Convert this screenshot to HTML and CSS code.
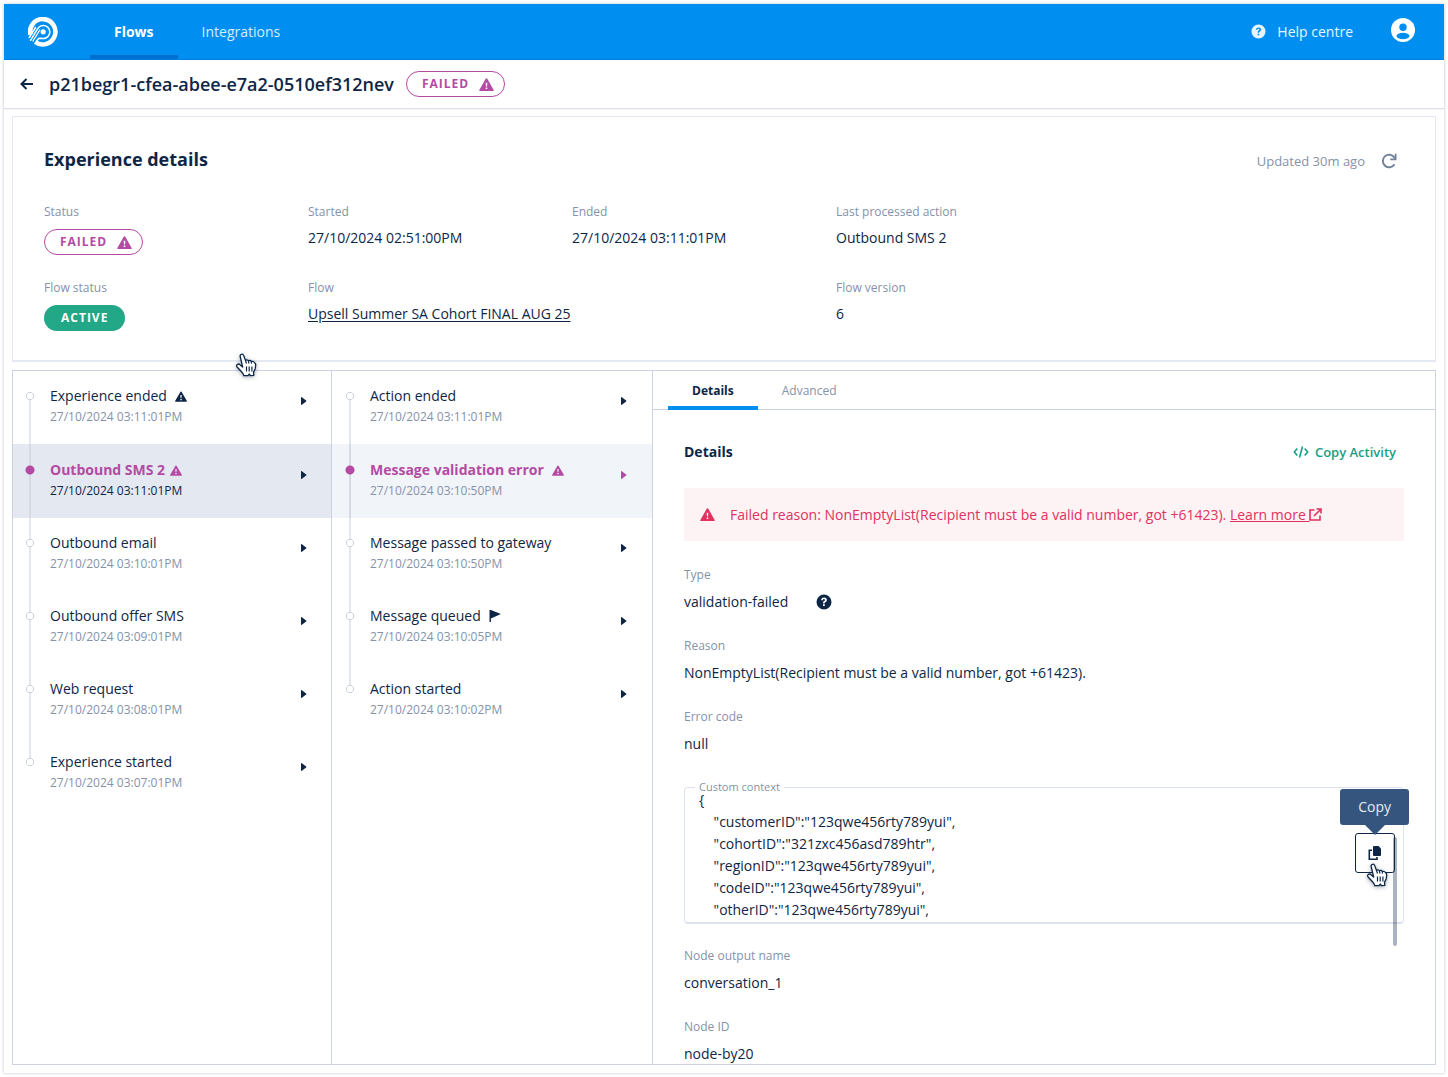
FILE: index.html
```html
<!DOCTYPE html>
<html lang="en">
<head>
    <meta charset="UTF-8">
    <meta name="viewport" content="width=device-width, initial-scale=1">
    <title>Experience details</title>
    <link rel="stylesheet" href="styles.css">
</head>
<body>
    <!-- Shared icons -->
    <svg class="icon-defs" aria-hidden="true">
        <symbol id="icon-warning" viewBox="0 0 16 14">
            <path fill="currentColor" fill-rule="evenodd" d="M7.3.6a.8.8 0 0 1 1.4 0l7 12.2a.8.8 0 0 1-.7 1.2H1a.8.8 0 0 1-.7-1.2zM7.1 5l.3 4.2h1.2L8.9 5zM7.1 10.3v1.6h1.8v-1.6z"/>
        </symbol>
        <symbol id="icon-help" viewBox="0 0 16 16">
            <path fill="currentColor" fill-rule="evenodd" d="M8 .5a7.500 7.500 0 1 1 0 15 7.500 7.500 0 0 1 0-15zM5.200 6.200h1.700c0-.8.4-1.200 1.100-1.200.6 0 1 .3 1 .9 0 .5-.3.8-.8 1.100-.8.500-1.100.900-1.100 2v.4h1.600v-.3c0-.5.2-.8.9-1.200.7-.4 1.200-1 1.200-2 0-1.400-1.100-2.300-2.700-2.300-1.800 0-2.900 1-2.900 2.600zM7 10.300v1.800h1.800v-1.800z"/>
        </symbol>
        <symbol id="icon-caret" viewBox="0 0 6 8">
            <path fill="currentColor" d="M0 .6C0 .1.500-.1.900.2l4.200 3.300a.6.6 0 0 1 0 1L.9 7.800C.5 8.100 0 7.900 0 7.400z"/>
        </symbol>
        <symbol id="icon-pointer" viewBox="0 0 22 24">
            <path fill="#fff" stroke="#0e2646" stroke-width="1.300" stroke-linejoin="round" d="M5.300 4C4.800 2.700 5.300 1.600 6.400 1.300c1-.3 1.900.2 2.300 1.300l1.800 4.900c.3-.9 2.500-.9 2.900.4.700-.8 2.500-.5 2.900.7 1.300-.6 2.700-.1 3.200 1.200.8.200 1.300.8 1.200 1.900-.1 1.300-.2 2.900-.6 4.300l-1.600 3.400.3 2.900-3.500.3-.9-1.600-1.400 1.700H8.800c-.2-1.700-1.300-3-2.700-4.400l-4-4.300C1.300 13 1.500 11.800 2.500 11.300c1-.5 2-.2 2.700.6l2.500 2.200z"/>
            <path fill="none" stroke="#0e2646" stroke-width="1.200" d="M10.500 7.500l1 3M13.400 8l.5 2.500M16.300 8.800l.2 1.800M11.500 13.500v5M14.200 13.500v5M16.900 13.500v5"/>
        </symbol>
    </svg>

    <div class="app">
        <header class="topbar">
            <a href="#" class="logo" aria-label="Home">
                <svg width="30" height="30" viewBox="0 0 30 30" fill="none" stroke="#fff">
                    <path stroke-width="4.600" d="M2.400 17.800A12.700 12.700 0 1 1 7.200 25"/>
                    <path stroke-width="1.500" stroke-linecap="round" d="M1.300 20.500L7.500 10.500"/>
                    <path stroke-width="1.500" stroke-linecap="round" d="M2.600 23.300L9.400 12.200A6.500 6.500 0 1 1 13.500 21.200L10.500 21.500L7.800 25.500"/>
                    <path stroke-width="1.300" stroke-linecap="round" d="M5 24L11.800 13"/>
                    <circle cx="15.200" cy="14.800" r="2.600" fill="#fff" stroke="none"/>
                </svg>
            </a>
            <nav class="main-nav">
                <a href="#" class="active">Flows</a>
                <a href="#">Integrations</a>
            </nav>
            <a href="#" class="help-link">
                <svg width="15" height="15"><use href="#icon-help"/></svg>
                Help centre
            </a>
            <button class="account" aria-label="Account">
                <svg width="24" height="24" viewBox="0 0 24 24">
                    <circle cx="12" cy="12" r="12" fill="#fff"/>
                    <circle cx="12" cy="9.200" r="3.700" fill="#008ff0"/>
                    <ellipse cx="12" cy="18" rx="6.500" ry="3.200" fill="#008ff0"/>
                </svg>
            </button>
        </header>

        <div class="title-bar">
            <a href="#" class="back" aria-label="Back">
                <svg width="13" height="12" viewBox="0 0 13 12" fill="none" stroke="currentColor" stroke-width="2">
                    <path d="M6.500 1L1.500 6l5 5M1.500 6H13"/>
                </svg>
            </a>
            <h1>p21begr1-cfea-abee-e7a2-0510ef312nev</h1>
            <span class="badge failed">FAILED <svg width="15" height="13"><use href="#icon-warning"/></svg></span>
        </div>

        <main>
            <section class="summary">
                <div class="summary-header">
                    <h2>Experience details</h2>
                    <span class="updated">Updated 30m ago</span>
                    <button class="refresh" aria-label="Refresh">
                        <svg width="16" height="16" viewBox="0 0 16 16" fill="none" stroke="currentColor" stroke-width="2">
                            <path d="M13.500 11.300A6.300 6.300 0 1 1 13.300 4.400L14.300 6"/>
                            <path fill="currentColor" stroke="none" d="M15.500.8v6.400H9.200V5.400h4.500V.8z"/>
                        </svg>
                    </button>
                </div>
                <dl class="facts">
                    <div>
                        <dt>Status</dt>
                        <dd><span class="badge failed">FAILED <svg width="15" height="13"><use href="#icon-warning"/></svg></span></dd>
                    </div>
                    <div>
                        <dt>Started</dt>
                        <dd>27/10/2024 02:51:00PM</dd>
                    </div>
                    <div>
                        <dt>Ended</dt>
                        <dd>27/10/2024 03:11:01PM</dd>
                    </div>
                    <div>
                        <dt>Last processed action</dt>
                        <dd>Outbound SMS 2</dd>
                    </div>
                    <div>
                        <dt>Flow status</dt>
                        <dd><span class="badge live">ACTIVE</span></dd>
                    </div>
                    <div class="wide">
                        <dt>Flow</dt>
                        <dd><a href="#">Upsell Summer SA Cohort FINAL AUG 25</a></dd>
                    </div>
                    <div>
                        <dt>Flow version</dt>
                        <dd>6</dd>
                    </div>
                </dl>
                <svg class="pointer summary-pointer" width="22" height="24"><use href="#icon-pointer"/></svg>
            </section>

            <section class="explorer">
                <ol class="timeline">
                    <li>
                        <button>
                            <span class="rail"></span>
                            <span class="entry">
                                <span class="name">Experience ended <svg width="12" height="11"><use href="#icon-warning"/></svg></span>
                                <time>27/10/2024 03:11:01PM</time>
                            </span>
                            <svg class="caret" width="6" height="8"><use href="#icon-caret"/></svg>
                        </button>
                    </li>
                    <li class="selected">
                        <button>
                            <span class="rail"></span>
                            <span class="entry">
                                <span class="name tight">Outbound SMS 2 <svg width="12" height="11"><use href="#icon-warning"/></svg></span>
                                <time>27/10/2024 03:11:01PM</time>
                            </span>
                            <svg class="caret" width="6" height="8"><use href="#icon-caret"/></svg>
                        </button>
                    </li>
                    <li>
                        <button>
                            <span class="rail"></span>
                            <span class="entry">
                                <span class="name">Outbound email</span>
                                <time>27/10/2024 03:10:01PM</time>
                            </span>
                            <svg class="caret" width="6" height="8"><use href="#icon-caret"/></svg>
                        </button>
                    </li>
                    <li>
                        <button>
                            <span class="rail"></span>
                            <span class="entry">
                                <span class="name">Outbound offer SMS</span>
                                <time>27/10/2024 03:09:01PM</time>
                            </span>
                            <svg class="caret" width="6" height="8"><use href="#icon-caret"/></svg>
                        </button>
                    </li>
                    <li>
                        <button>
                            <span class="rail"></span>
                            <span class="entry">
                                <span class="name">Web request</span>
                                <time>27/10/2024 03:08:01PM</time>
                            </span>
                            <svg class="caret" width="6" height="8"><use href="#icon-caret"/></svg>
                        </button>
                    </li>
                    <li>
                        <button>
                            <span class="rail"></span>
                            <span class="entry">
                                <span class="name">Experience started</span>
                                <time>27/10/2024 03:07:01PM</time>
                            </span>
                            <svg class="caret" width="6" height="8"><use href="#icon-caret"/></svg>
                        </button>
                    </li>
                </ol>

                <ol class="timeline actions">
                    <li>
                        <button>
                            <span class="rail"></span>
                            <span class="entry">
                                <span class="name">Action ended</span>
                                <time>27/10/2024 03:11:01PM</time>
                            </span>
                            <svg class="caret" width="6" height="8"><use href="#icon-caret"/></svg>
                        </button>
                    </li>
                    <li class="selected">
                        <button>
                            <span class="rail"></span>
                            <span class="entry">
                                <span class="name">Message validation error <svg width="12" height="11"><use href="#icon-warning"/></svg></span>
                                <time>27/10/2024 03:10:50PM</time>
                            </span>
                            <svg class="caret" width="6" height="8"><use href="#icon-caret"/></svg>
                        </button>
                    </li>
                    <li>
                        <button>
                            <span class="rail"></span>
                            <span class="entry">
                                <span class="name">Message passed to gateway</span>
                                <time>27/10/2024 03:10:50PM</time>
                            </span>
                            <svg class="caret" width="6" height="8"><use href="#icon-caret"/></svg>
                        </button>
                    </li>
                    <li>
                        <button>
                            <span class="rail"></span>
                            <span class="entry">
                                <span class="name">Message queued
                                    <svg width="12" height="12" viewBox="0 0 12 12"><path fill="currentColor" d="M.5 0h1.400l10 4-10 4.400V12H.5z"/></svg>
                                </span>
                                <time>27/10/2024 03:10:05PM</time>
                            </span>
                            <svg class="caret" width="6" height="8"><use href="#icon-caret"/></svg>
                        </button>
                    </li>
                    <li>
                        <button>
                            <span class="rail"></span>
                            <span class="entry">
                                <span class="name">Action started</span>
                                <time>27/10/2024 03:10:02PM</time>
                            </span>
                            <svg class="caret" width="6" height="8"><use href="#icon-caret"/></svg>
                        </button>
                    </li>
                </ol>

                <div class="detail-pane">
                    <div class="tabs" role="tablist">
                        <button role="tab" aria-selected="true" class="active">Details</button>
                        <button role="tab" aria-selected="false">Advanced</button>
                    </div>
                    <div class="detail-body">
                        <div class="detail-header">
                            <h3>Details</h3>
                            <button class="copy-activity">
                                <svg width="16" height="12" viewBox="0 0 16 12" fill="none" stroke="currentColor" stroke-width="1.600">
                                    <path d="M4.300 2.500L1.300 6l3 3.500M11.700 2.500l3 3.500-3 3.500M9.500.5l-3 11"/>
                                </svg>
                                Copy Activity
                            </button>
                        </div>

                        <div class="alert" role="alert">
                            <svg width="15" height="13"><use href="#icon-warning"/></svg>
                            <p>Failed reason: NonEmptyList(Recipient must be a valid number, got +61423).
                                <a href="#">Learn more <svg width="13" height="13" viewBox="0 0 13 13" fill="none" stroke="currentColor" stroke-width="1.600"><path d="M5.500 2H1v10h10V7.500M7.500 1H12v4.500M12 1L5 8"/></svg></a>
                            </p>
                        </div>

                        <dl class="fields">
                            <dt>Type</dt>
                            <dd>validation-failed <svg width="16" height="16"><use href="#icon-help"/></svg></dd>
                            <dt>Reason</dt>
                            <dd>NonEmptyList(Recipient must be a valid number, got +61423).</dd>
                            <dt>Error code</dt>
                            <dd>null</dd>
                        </dl>

                        <div class="context">
                            <fieldset>
                                <legend>Custom context</legend>
                                <pre>{
    "customerID":"123qwe456rty789yui",
    "cohortID":"321zxc456asd789htr",
    "regionID":"123qwe456rty789yui",
    "codeID":"123qwe456rty789yui",
    "otherID":"123qwe456rty789yui",</pre>
                            </fieldset>
                            <div class="copy-tool">
                                <span class="tooltip" role="tooltip">Copy</span>
                                <button aria-label="Copy custom context">
                                    <svg width="14" height="14" viewBox="0 0 14 14">
                                        <path fill="currentColor" d="M6 0h4.500L13 2.500V9a1 1 0 0 1-1 1H6a1 1 0 0 1-1-1V1a1 1 0 0 1 1-1z"/>
                                        <path fill="none" stroke="currentColor" stroke-width="1.600" d="M4 4.300H1.300v8.900H9V11"/>
                                    </svg>
                                </button>
                                <svg class="pointer copy-pointer" width="22" height="24"><use href="#icon-pointer"/></svg>
                            </div>
                            <span class="scroll-thumb"></span>
                        </div>

                        <dl class="fields">
                            <dt>Node output name</dt>
                            <dd>conversation_1</dd>
                            <dt>Node ID</dt>
                            <dd>node-by20</dd>
                        </dl>
                    </div>
                </div>
            </section>
        </main>
    </div>
</body>
</html>
```
FILE: styles.css
```css
* {
    margin: 0;
    padding: 0;
    box-sizing: border-box;
}

body {
    background-color: #fff;
    color: #0e2646;
    font-family: "Open Sans", "Noto Sans", sans-serif;
    font-size: 14px;
    line-height: 20px;
}

a {
    color: inherit;
}

button {
    background: none;
    border: none;
    color: inherit;
    font: inherit;
    cursor: pointer;
}

svg {
    flex-shrink: 0;
}

.icon-defs {
    position: absolute;
    width: 0;
    height: 0;
}

.app {
    display: flex;
    flex-direction: column;
    min-height: calc(100vh - 8px);
    margin: 4px;
    box-shadow: 0 0 3px rgba(50, 60, 110, 0.3);
}

/* Blue top bar */
.topbar {
    display: flex;
    align-items: center;
    height: 56px;
    padding: 0 29px 0 24px;
    background-color: #008ff0;
    border-bottom: 1px solid #0080e4;
    color: #fff;
}

.logo {
    display: flex;
    margin-right: 32px;
}

.main-nav {
    display: flex;
    align-self: stretch;
    flex: 1;
}

.main-nav a {
    padding: 18px 24px 0;
    color: #d4edff;
    text-decoration: none;
}

.main-nav a.active {
    border-bottom: 4px solid #006fd0;
    color: #fff;
    font-weight: 700;
}

.help-link {
    display: flex;
    align-items: center;
    gap: 11px;
    margin-right: 38px;
    color: #e6f5ff;
    text-decoration: none;
}

.account {
    display: flex;
    margin-bottom: 3px;
}

/* Title bar */
.title-bar {
    display: flex;
    align-items: center;
    height: 49px;
    padding: 0 16px;
    border-bottom: 1px solid #dcdfeb;
    box-shadow: 0 1px 2px rgba(50, 60, 110, 0.06);
}

.back {
    display: flex;
    margin-right: 16px;
}

.title-bar h1 {
    margin-right: 12px;
    font-size: 18px;
    font-weight: 600;
    line-height: 24px;
}

.badge {
    display: inline-flex;
    align-items: center;
    gap: 10px;
    height: 26px;
    padding: 0 15px;
    border-radius: 13px;
    font-size: 12px;
    font-weight: 700;
    letter-spacing: 1px;
}

.badge.failed {
    padding-right: 10px;
    border: 1px solid #b44aa4;
    color: #b44aa4;
}

.badge.live {
    padding: 0 17px;
    background-color: #22a787;
    color: #fff;
}

main {
    display: flex;
    flex: 1;
    flex-direction: column;
    gap: 8px;
    padding: 7px 8px 8px;
}

/* Experience summary */
.summary {
    position: relative;
    padding: 30px 31px;
    border: 1px solid #e3e8f1;
    border-bottom-width: 2px;
}

.summary-header {
    display: flex;
    align-items: flex-end;
    margin-bottom: 31px;
    padding-right: 7px;
}

.summary-header h2 {
    flex: 1;
    font-size: 18px;
    line-height: 24px;
}

.updated {
    margin-right: 16px;
    color: #8592a9;
    font-size: 13px;
}

.refresh {
    display: flex;
    padding-bottom: 2px;
    color: #75849d;
}

.facts {
    display: grid;
    grid-template-columns: repeat(4, 264px);
    row-gap: 24px;
}

.facts .wide {
    grid-column: span 2;
}

.facts dt,
.fields dt {
    color: #8592a9;
    font-size: 12px;
}

.facts dd {
    height: 26px;
    margin-top: 6px;
}

.facts dd a {
    text-underline-offset: 2px;
}

.facts dd .badge {
    vertical-align: top;
    margin-top: 1px;
}

.pointer {
    position: absolute;
    filter: drop-shadow(0 1px 2px rgba(14, 38, 70, 0.4));
    pointer-events: none;
}

.summary-pointer {
    left: 222px;
    bottom: -17px;
    z-index: 1;
}

/* Three column explorer */
.explorer {
    display: grid;
    flex: 1;
    grid-template-columns: 319px 321px 1fr;
    border: 1px solid #cdd2e2;
}

.timeline {
    border-right: 1px solid #cdd2e2;
    list-style: none;
}

.timeline button {
    display: flex;
    align-items: flex-start;
    width: 100%;
    height: 73px;
    padding: 0 24px 0 12px;
    text-align: left;
}

.timeline.actions button {
    padding: 0 25px 0 13px;
}

.rail {
    display: flex;
    flex-direction: column;
    align-items: center;
    align-self: stretch;
    width: 10px;
    margin-right: 15px;
    background:
        radial-gradient(circle at 5px 25px, #fff 3px, #cdd2e2 3px, #cdd2e2 4px, transparent 4px) no-repeat,
        linear-gradient(#e3e7f2, #e3e7f2) 4px 0 / 2px 100% no-repeat;
}

.timeline li:first-child .rail {
    background-size: auto, 2px 48px;
    background-position: 0 0, 4px 25px;
}

.timeline li:last-child .rail {
    background-size: auto, 2px 21px;
}

.timeline .selected .rail {
    background:
        radial-gradient(circle at 5px 26px, #b44aa4 4px, transparent 5px) no-repeat,
        linear-gradient(#d6dae3, #d6dae3) 4px 0 / 2px 100% no-repeat;
}

.entry {
    flex: 1;
    padding-top: 15px;
}

.name {
    display: flex;
    align-items: center;
    gap: 8px;
}

.name.tight {
    gap: 5px;
}

.entry time {
    display: block;
    margin-top: 1px;
    color: #8592a9;
    font-size: 12px;
}

.caret {
    margin-top: 26px;
}

.timeline .selected button {
    height: 74px;
    background-color: #e3e8f1;
}

.timeline .selected .entry {
    padding-top: 16px;
}

.timeline .selected .caret {
    margin-top: 27px;
}

.timeline .selected .name {
    color: #b44aa4;
    font-weight: 700;
}

.timeline .selected time {
    color: #0e2646;
}

.timeline.actions .selected button {
    background-color: #f1f5fa;
}

.timeline.actions .selected .caret {
    color: #b44aa4;
}

.timeline.actions .selected time {
    color: #8592a9;
}

/* Detail pane */
.tabs {
    display: flex;
    height: 39px;
    padding-left: 15px;
    border-bottom: 1px solid #cdd2e2;
}

.tabs button {
    height: 39px;
    padding: 0 24px;
    color: #8592a9;
    font-size: 12px;
}

.tabs button.active {
    padding-top: 4px;
    border-bottom: 4px solid #008ff0;
    color: #0e2646;
    font-weight: 700;
}

.detail-body {
    padding: 32px 31px 0;
}

.detail-header {
    display: flex;
    justify-content: space-between;
    align-items: center;
    margin-bottom: 26px;
    padding-right: 8px;
}

.detail-header h3 {
    font-size: 14px;
}

.copy-activity {
    display: flex;
    align-items: center;
    gap: 6px;
    color: #16a085;
    font-size: 13px;
    font-weight: 600;
}

.alert {
    display: flex;
    align-items: center;
    gap: 15px;
    margin-bottom: 24px;
    padding: 16px;
    background-color: #fdf3f4;
    color: #e0315f;
    line-height: 21px;
}

.alert svg {
    vertical-align: -1px;
}

.fields dt {
    margin-bottom: 7px;
}

.fields dd {
    display: flex;
    align-items: center;
    gap: 28px;
    margin-bottom: 24px;
}

.fields dd:last-child {
    margin-bottom: 0;
}

.context {
    position: relative;
    margin: 27px 0 22px;
}

.context fieldset {
    padding: 0 14px 1px;
    border: 1px solid #dce2ed;
    border-bottom-width: 2px;
    border-radius: 4px;
}

.context legend {
    margin-left: -4px;
    padding: 0 4px;
    color: #8592a9;
    font-size: 11px;
    line-height: 12px;
}

.context pre {
    margin-top: -4px;
    font-family: inherit;
    line-height: 22px;
}

.copy-tool {
    position: absolute;
    top: 52px;
    right: 9px;
}

.copy-tool button {
    display: flex;
    align-items: center;
    justify-content: center;
    width: 40px;
    height: 40px;
    background-color: #fff;
    border: 1px solid #0e2646;
    border-radius: 3px;
}

.tooltip {
    position: absolute;
    right: -14px;
    bottom: 48px;
    padding: 8px 18px;
    background-color: #36557e;
    border-radius: 3px;
    color: #e6ebf3;
}

.tooltip::after {
    content: "";
    position: absolute;
    top: 100%;
    left: 50%;
    margin-left: -10px;
    border: 10px solid transparent;
    border-top-color: #36557e;
    border-bottom: none;
}

.copy-pointer {
    top: 30px;
    left: 11px;
}

.scroll-thumb {
    position: absolute;
    top: 56px;
    right: 7px;
    width: 4px;
    height: 109px;
    border-radius: 2px;
    background-color: rgba(14, 38, 70, 0.35);
}
```
